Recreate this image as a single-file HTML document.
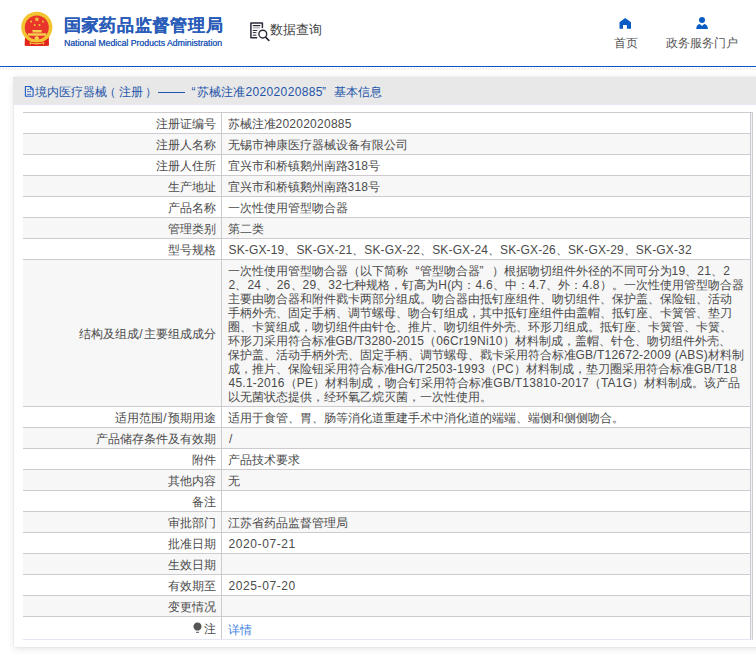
<!DOCTYPE html>
<html><head><meta charset="utf-8">
<style>
*{margin:0;padding:0;box-sizing:border-box}
html,body{width:756px;height:655px;overflow:hidden;background:#fff;font-family:"Liberation Sans",sans-serif;color:#4b4b4b;font-size:12px}
.hdr{position:absolute;left:0;top:0;width:756px;height:66px}
.emb{position:absolute;left:18px;top:8px;width:38px;height:42px}
.t1{position:absolute;left:63.5px;top:14.5px;font-size:17px;letter-spacing:0.75px;font-weight:bold;color:#2a5cb8;text-shadow:0.4px 0 0 #2a5cb8;line-height:22px;white-space:nowrap}
.t2{position:absolute;left:64px;top:38px;font-size:9.3px;color:#2a5cb8;line-height:10px;white-space:nowrap;transform:scaleX(0.935);transform-origin:0 0;text-shadow:0.15px 0 0 #2a5cb8}
.sq{position:absolute;left:247px;top:19px;width:26px;height:24px}
.sqt{position:absolute;left:270px;top:21.5px;font-size:13px;color:#444;line-height:16px;white-space:nowrap}
.nav1{position:absolute;left:614px;top:36px;font-size:12px;line-height:14px;color:#555;white-space:nowrap}
.nav2{position:absolute;left:665.5px;top:36px;font-size:12px;line-height:14px;color:#555;white-space:nowrap}
.ic1{position:absolute;left:614px;top:14px;width:22px;height:18px}
.ic2{position:absolute;left:691px;top:14px;width:22px;height:18px}
.bl{position:absolute;left:0;top:66px;width:756px;height:1px;background:#0757c2}
.d1{position:absolute;left:0;top:68px;width:756px;height:1px;background:repeating-linear-gradient(90deg,#e0e0e0 0 1px,#fff 1px 3px)}
.d2{position:absolute;left:2px;top:69px;width:756px;height:1px;background:repeating-linear-gradient(90deg,#e6e6e6 0 1px,#fff 1px 3px)}
.panel{position:absolute;left:14px;top:77px;width:760px;height:570px;background:#fff;box-shadow:0 0 2px rgba(0,0,0,.09),0 2px 8px rgba(0,0,0,.1)}
.ph{position:absolute;left:-1px;top:0;width:761px;height:28px;background:#e8e8e8;color:#1f55a8;line-height:27px;white-space:nowrap;border-bottom:1px solid #e6eaf3}
.ph span{position:absolute;top:2px}
.ph svg{position:absolute;left:9px;top:6px;width:14px;height:16px}
.tw{position:absolute;left:9px;top:35px;width:730px;border-top:1px solid #cecbce;border-right:1px solid #cecbce;border-bottom:1px solid #e3e7f1;background:#eef1f6}
table{width:728px;border-collapse:collapse;table-layout:fixed}
td{border-top:1px solid #cecbce;height:21px;padding:2px 6px 0 6px;line-height:14px;vertical-align:middle;white-space:nowrap;background:#fff}
tr:first-child td{border-top:none;height:20px}
td.l{width:198px;text-align:right;padding-right:5px;border-right:1px solid #cecbce}
td.v{border-right:1px solid #cecbce}
tr:nth-child(even) td{background:#f7f7f7}
.big td{height:147px}
tr.last td{height:23px}
b{font-weight:normal}
.n{letter-spacing:0.25px}
.n2{letter-spacing:0.15px}
.sl{padding:0 0.8px}
.f{margin-left:1px}
.ql{display:inline-block;width:12px;text-align:right}
.qr{display:inline-block;width:12px;text-align:left}
a{color:#3d7fe0;text-decoration:none;position:relative;top:1px}
.bulb{display:inline-block;vertical-align:-1px;width:9px;height:12px;margin-right:2px}
.c{display:inline-block;width:1em;text-align:center;font-style:normal}
.t1 .c{width:calc(1em + 0.75px)}
</style></head><body>
<div class="hdr">
  <svg class="emb" viewBox="18 8 38 42">
    <path d="M25 37 L48.8 37 L49 45.6 Q44 46 40 45.2 L33.5 45.2 Q29 46 24.6 45.6 Z" fill="#e3261b"/>
    <circle cx="36.8" cy="27.3" r="15.6" fill="#f3c431"/>
    <circle cx="36.8" cy="27.4" r="12" fill="#e8342a"/>
    <path d="M36.9 16.6 L37.6 18.5 L39.5 18.5 L38 19.7 L38.6 21.6 L36.9 20.4 L35.2 21.6 L35.8 19.7 L34.3 18.5 L36.2 18.5Z" fill="#f6d040"/>
    <circle cx="31.1" cy="21.5" r="1" fill="#f0c63a"/>
    <circle cx="43" cy="21.5" r="1" fill="#f0c63a"/>
    <circle cx="34.7" cy="25" r="1" fill="#f0c63a"/>
    <circle cx="39.5" cy="25" r="1" fill="#f0c63a"/>
    <path d="M31.8 30 L42.4 30 L41.6 31 L41.6 32.4 L32.6 32.4 L32.6 31Z" fill="#f5d050"/>
    <rect x="27.9" y="33.3" width="18.2" height="2.4" fill="#f5d050"/>
    <path d="M26.5 41.2 Q36.8 43.6 47.1 41.2 L48.6 45.4 Q36.8 46.6 25 45.4Z" fill="#e3261b"/>
    <path d="M36.8 36 L37.8 36.4 L38.8 37.4 L39 38.6 L38.3 39.7 L36.8 40.2 L35.3 39.7 L34.6 38.6 L34.8 37.4 L35.8 36.4Z" fill="#f5d24a"/>
    <path d="M29.3 42 Q36.9 44.6 44.5 42 L44 43.4 L43.6 45.3 L42.8 43.6 Q36.9 45.2 31 43.6 L30.2 45.3 L29.8 43.4Z" fill="#f2cc48"/>
  </svg>
  <div class="t1"><i class="c">国</i><i class="c">家</i><i class="c">药</i><i class="c">品</i><i class="c">监</i><i class="c">督</i><i class="c">管</i><i class="c">理</i><i class="c">局</i></div>
  <div class="t2">National Medical Products Administration</div>
  <svg class="sq" viewBox="247 19 26 24" fill="none" stroke="#2b2b3b" stroke-linecap="round" stroke-linejoin="round">
    <path d="M256.7 37.7 H250.9 V22.9 H262.4 V27.6" stroke-width="1.5"/>
    <path d="M253.2 25.6 H259.8" stroke-width="1.1"/>
    <path d="M253.2 27.9 H259.8" stroke-width="1" stroke="#9a9aa4"/>
    <path d="M253.2 30.5 H256.8 M253.2 32.6 H256 M253.2 35.2 H256" stroke-width="1"/>
    <circle cx="262.8" cy="34.1" r="3.9" stroke-width="1.4"/>
    <path d="M265.6 37.1 L268.8 40.3" stroke-width="1.7"/>
  </svg>
  <div class="sqt"><i class="c">数</i><i class="c">据</i><i class="c">查</i><i class="c">询</i></div>
  <svg class="ic1" viewBox="614 14 22 18"><path d="M625.2 18 L631 22.2 L631 28.8 L626.9 28.8 L626.9 24.9 L623 24.9 L623 28.8 L619.5 28.8 L619.5 22.2Z" fill="#0a5cc5"/></svg>
  <div class="nav1"><i class="c">首</i><i class="c">页</i></div>
  <svg class="ic2" viewBox="691 14 22 18"><circle cx="702" cy="20.1" r="3" fill="#0a5cc5"/><path d="M696.2 29 Q696.5 24.3 699.8 23.9 L702 25.9 L704.2 23.9 Q707.6 24.3 708 29Z" fill="#0a5cc5"/></svg>
  <div class="nav2"><i class="c">政</i><i class="c">务</i><i class="c">服</i><i class="c">务</i><i class="c">门</i><i class="c">户</i></div>
</div>
<div class="bl"></div>
<div class="d1"></div><div class="d2"></div>
<div class="panel">
  <div class="ph">
    <svg viewBox="22 83 14 16" fill="none" stroke="#1f5fc5" stroke-linejoin="round">
      <path d="M25.4 86.5 H30.4 L33.1 89.2 V96.3 H25.4 Z" stroke-width="1.1"/>
      <path d="M30.4 86.5 V89.2 H33.1" stroke-width="1"/>
      <path d="M27 89.5 H28.8 M27 91.6 H31 M27 94.4 H31" stroke-width="1" stroke="#4a73c8"/>
    </svg>
    <span style="left:21.5px"><i class="c">境</i><i class="c">内</i><i class="c">医</i><i class="c">疗</i><i class="c">器</i><i class="c">械</i></span>
    <span style="left:91px"><i class="c">（</i></span>
    <span style="left:105.6px"><i class="c">注</i><i class="c">册</i></span>
    <span style="left:132px"><i class="c">）</i></span>
    <i style="position:absolute;left:145.3px;top:15px;width:26.3px;height:1px;background:#1f55a8"></i>
    <span style="left:178.5px">“</span>
    <span style="left:183.7px"><i class="c">苏</i><i class="c">械</i><i class="c">注</i><i class="c">准</i></span>
    <span style="left:232.5px;letter-spacing:0.35px">20202020885</span>
    <span style="left:309px">”</span>
    <span style="left:321px"><i class="c">基</i><i class="c">本</i><i class="c">信</i><i class="c">息</i></span>
  </div>
  <div class="tw">
  <table>
    <tr><td class="l"><i class="c">注</i><i class="c">册</i><i class="c">证</i><i class="c">编</i><i class="c">号</i></td><td class="v"><i class="c">苏</i><i class="c">械</i><i class="c">注</i><i class="c">准</i><b class="n">20202020885</b></td></tr>
    <tr><td class="l"><i class="c">注</i><i class="c">册</i><i class="c">人</i><i class="c">名</i><i class="c">称</i></td><td class="v"><i class="c">无</i><i class="c">锡</i><i class="c">市</i><i class="c">神</i><i class="c">康</i><i class="c">医</i><i class="c">疗</i><i class="c">器</i><i class="c">械</i><i class="c">设</i><i class="c">备</i><i class="c">有</i><i class="c">限</i><i class="c">公</i><i class="c">司</i></td></tr>
    <tr><td class="l"><i class="c">注</i><i class="c">册</i><i class="c">人</i><i class="c">住</i><i class="c">所</i></td><td class="v"><i class="c">宜</i><i class="c">兴</i><i class="c">市</i><i class="c">和</i><i class="c">桥</i><i class="c">镇</i><i class="c">鹅</i><i class="c">州</i><i class="c">南</i><i class="c">路</i><b class="n">318</b><i class="c">号</i></td></tr>
    <tr><td class="l"><i class="c">生</i><i class="c">产</i><i class="c">地</i><i class="c">址</i></td><td class="v"><i class="c">宜</i><i class="c">兴</i><i class="c">市</i><i class="c">和</i><i class="c">桥</i><i class="c">镇</i><i class="c">鹅</i><i class="c">州</i><i class="c">南</i><i class="c">路</i><b class="n">318</b><i class="c">号</i></td></tr>
    <tr><td class="l"><i class="c">产</i><i class="c">品</i><i class="c">名</i><i class="c">称</i></td><td class="v"><i class="c">一</i><i class="c">次</i><i class="c">性</i><i class="c">使</i><i class="c">用</i><i class="c">管</i><i class="c">型</i><i class="c">吻</i><i class="c">合</i><i class="c">器</i></td></tr>
    <tr><td class="l"><i class="c">管</i><i class="c">理</i><i class="c">类</i><i class="c">别</i></td><td class="v"><i class="c">第</i><i class="c">二</i><i class="c">类</i></td></tr>
    <tr><td class="l"><i class="c">型</i><i class="c">号</i><i class="c">规</i><i class="c">格</i></td><td class="v"><b class="n2 f">SK-GX-19</b><i class="c">、</i><b class="n2">SK-GX-21</b><i class="c">、</i><b class="n2">SK-GX-22</b><i class="c">、</i><b class="n2">SK-GX-24</b><i class="c">、</i><b class="n2">SK-GX-26</b><i class="c">、</i><b class="n2">SK-GX-29</b><i class="c">、</i><b class="n2">SK-GX-32</b></td></tr>
    <tr class="big"><td class="l"><i class="c">结</i><i class="c">构</i><i class="c">及</i><i class="c">组</i><i class="c">成</i><b class="sl">/</b><i class="c">主</i><i class="c">要</i><i class="c">组</i><i class="c">成</i><i class="c">成</i><i class="c">分</i></td><td class="v"><i class="c">一</i><i class="c">次</i><i class="c">性</i><i class="c">使</i><i class="c">用</i><i class="c">管</i><i class="c">型</i><i class="c">吻</i><i class="c">合</i><i class="c">器</i><i class="c">（</i><i class="c">以</i><i class="c">下</i><i class="c">简</i><i class="c">称</i><b class="ql">“</b><i class="c">管</i><i class="c">型</i><i class="c">吻</i><i class="c">合</i><i class="c">器</i><b class="qr">”</b><i class="c">）</i><i class="c">根</i><i class="c">据</i><i class="c">吻</i><i class="c">切</i><i class="c">组</i><i class="c">件</i><i class="c">外</i><i class="c">径</i><i class="c">的</i><i class="c">不</i><i class="c">同</i><i class="c">可</i><i class="c">分</i><i class="c">为</i><b class="n">19</b><i class="c">、</i><b class="n">21</b><i class="c">、</i><b class="n">2</b><br><b class="n f">2</b><i class="c">、</i><b class="n">24</b> <i class="c">、</i><b class="n">26</b><i class="c">、</i><b class="n">29</b><i class="c">、</i><b class="n">32</b><i class="c">七</i><i class="c">种</i><i class="c">规</i><i class="c">格</i><i class="c">，</i><i class="c">钉</i><i class="c">高</i><i class="c">为</i><b class="n">H(</b><i class="c">内</i><i class="c">：</i><b class="n">4.6</b><i class="c">、</i><i class="c">中</i><i class="c">：</i><b class="n">4.7</b><i class="c">、</i><i class="c">外</i><i class="c">：</i><b class="n">4.8</b><i class="c">）</i><i class="c">。</i><i class="c">一</i><i class="c">次</i><i class="c">性</i><i class="c">使</i><i class="c">用</i><i class="c">管</i><i class="c">型</i><i class="c">吻</i><i class="c">合</i><i class="c">器</i><br><i class="c">主</i><i class="c">要</i><i class="c">由</i><i class="c">吻</i><i class="c">合</i><i class="c">器</i><i class="c">和</i><i class="c">附</i><i class="c">件</i><i class="c">戳</i><i class="c">卡</i><i class="c">两</i><i class="c">部</i><i class="c">分</i><i class="c">组</i><i class="c">成</i><i class="c">。</i><i class="c">吻</i><i class="c">合</i><i class="c">器</i><i class="c">由</i><i class="c">抵</i><i class="c">钉</i><i class="c">座</i><i class="c">组</i><i class="c">件</i><i class="c">、</i><i class="c">吻</i><i class="c">切</i><i class="c">组</i><i class="c">件</i><i class="c">、</i><i class="c">保</i><i class="c">护</i><i class="c">盖</i><i class="c">、</i><i class="c">保</i><i class="c">险</i><i class="c">钮</i><i class="c">、</i><i class="c">活</i><i class="c">动</i><br><i class="c">手</i><i class="c">柄</i><i class="c">外</i><i class="c">壳</i><i class="c">、</i><i class="c">固</i><i class="c">定</i><i class="c">手</i><i class="c">柄</i><i class="c">、</i><i class="c">调</i><i class="c">节</i><i class="c">螺</i><i class="c">母</i><i class="c">、</i><i class="c">吻</i><i class="c">合</i><i class="c">钉</i><i class="c">组</i><i class="c">成</i><i class="c">，</i><i class="c">其</i><i class="c">中</i><i class="c">抵</i><i class="c">钉</i><i class="c">座</i><i class="c">组</i><i class="c">件</i><i class="c">由</i><i class="c">盖</i><i class="c">帽</i><i class="c">、</i><i class="c">抵</i><i class="c">钉</i><i class="c">座</i><i class="c">、</i><i class="c">卡</i><i class="c">簧</i><i class="c">管</i><i class="c">、</i><i class="c">垫</i><i class="c">刀</i><br><i class="c">圈</i><i class="c">、</i><i class="c">卡</i><i class="c">簧</i><i class="c">组</i><i class="c">成</i><i class="c">，</i><i class="c">吻</i><i class="c">切</i><i class="c">组</i><i class="c">件</i><i class="c">由</i><i class="c">针</i><i class="c">仓</i><i class="c">、</i><i class="c">推</i><i class="c">片</i><i class="c">、</i><i class="c">吻</i><i class="c">切</i><i class="c">组</i><i class="c">件</i><i class="c">外</i><i class="c">壳</i><i class="c">、</i><i class="c">环</i><i class="c">形</i><i class="c">刀</i><i class="c">组</i><i class="c">成</i><i class="c">。</i><i class="c">抵</i><i class="c">钉</i><i class="c">座</i><i class="c">、</i><i class="c">卡</i><i class="c">簧</i><i class="c">管</i><i class="c">、</i><i class="c">卡</i><i class="c">簧</i><i class="c">、</i><br><i class="c">环</i><i class="c">形</i><i class="c">刀</i><i class="c">采</i><i class="c">用</i><i class="c">符</i><i class="c">合</i><i class="c">标</i><i class="c">准</i><b class="n">GB/T3280-2015</b><i class="c">（</i><b class="n">06Cr19Ni10</b><i class="c">）</i><i class="c">材</i><i class="c">料</i><i class="c">制</i><i class="c">成</i><i class="c">，</i><i class="c">盖</i><i class="c">帽</i><i class="c">、</i><i class="c">针</i><i class="c">仓</i><i class="c">、</i><i class="c">吻</i><i class="c">切</i><i class="c">组</i><i class="c">件</i><i class="c">外</i><i class="c">壳</i><i class="c">、</i><br><i class="c">保</i><i class="c">护</i><i class="c">盖</i><i class="c">、</i><i class="c">活</i><i class="c">动</i><i class="c">手</i><i class="c">柄</i><i class="c">外</i><i class="c">壳</i><i class="c">、</i><i class="c">固</i><i class="c">定</i><i class="c">手</i><i class="c">柄</i><i class="c">、</i><i class="c">调</i><i class="c">节</i><i class="c">螺</i><i class="c">母</i><i class="c">、</i><i class="c">戳</i><i class="c">卡</i><i class="c">采</i><i class="c">用</i><i class="c">符</i><i class="c">合</i><i class="c">标</i><i class="c">准</i><b class="n">GB/T12672-2009 (ABS)</b><i class="c">材</i><i class="c">料</i><i class="c">制</i><br><i class="c">成</i><i class="c">，</i><i class="c">推</i><i class="c">片</i><i class="c">、</i><i class="c">保</i><i class="c">险</i><i class="c">钮</i><i class="c">采</i><i class="c">用</i><i class="c">符</i><i class="c">合</i><i class="c">标</i><i class="c">准</i><b class="n">HG/T2503-1993</b><i class="c">（</i><b class="n">PC</b><i class="c">）</i><i class="c">材</i><i class="c">料</i><i class="c">制</i><i class="c">成</i><i class="c">，</i><i class="c">垫</i><i class="c">刀</i><i class="c">圈</i><i class="c">采</i><i class="c">用</i><i class="c">符</i><i class="c">合</i><i class="c">标</i><i class="c">准</i><b class="n">GB/T18</b><br><b class="n f">45.1-2016</b><i class="c">（</i><b class="n">PE</b><i class="c">）</i><i class="c">材</i><i class="c">料</i><i class="c">制</i><i class="c">成</i><i class="c">，</i><i class="c">吻</i><i class="c">合</i><i class="c">钉</i><i class="c">采</i><i class="c">用</i><i class="c">符</i><i class="c">合</i><i class="c">标</i><i class="c">准</i><b class="n">GB/T13810-2017</b><i class="c">（</i><b class="n">TA1G</b><i class="c">）</i><i class="c">材</i><i class="c">料</i><i class="c">制</i><i class="c">成</i><i class="c">。</i><i class="c">该</i><i class="c">产</i><i class="c">品</i><br><i class="c">以</i><i class="c">无</i><i class="c">菌</i><i class="c">状</i><i class="c">态</i><i class="c">提</i><i class="c">供</i><i class="c">，</i><i class="c">经</i><i class="c">环</i><i class="c">氧</i><i class="c">乙</i><i class="c">烷</i><i class="c">灭</i><i class="c">菌</i><i class="c">，</i><i class="c">一</i><i class="c">次</i><i class="c">性</i><i class="c">使</i><i class="c">用</i><i class="c">。</i></td></tr>
    <tr><td class="l"><i class="c">适</i><i class="c">用</i><i class="c">范</i><i class="c">围</i><b class="sl">/</b><i class="c">预</i><i class="c">期</i><i class="c">用</i><i class="c">途</i></td><td class="v"><i class="c">适</i><i class="c">用</i><i class="c">于</i><i class="c">食</i><i class="c">管</i><i class="c">、</i><i class="c">胃</i><i class="c">、</i><i class="c">肠</i><i class="c">等</i><i class="c">消</i><i class="c">化</i><i class="c">道</i><i class="c">重</i><i class="c">建</i><i class="c">手</i><i class="c">术</i><i class="c">中</i><i class="c">消</i><i class="c">化</i><i class="c">道</i><i class="c">的</i><i class="c">端</i><i class="c">端</i><i class="c">、</i><i class="c">端</i><i class="c">侧</i><i class="c">和</i><i class="c">侧</i><i class="c">侧</i><i class="c">吻</i><i class="c">合</i><i class="c">。</i></td></tr>
    <tr><td class="l"><i class="c">产</i><i class="c">品</i><i class="c">储</i><i class="c">存</i><i class="c">条</i><i class="c">件</i><i class="c">及</i><i class="c">有</i><i class="c">效</i><i class="c">期</i></td><td class="v"><b class="n" style="padding-left:1.5px">/</b></td></tr>
    <tr><td class="l"><i class="c">附</i><i class="c">件</i></td><td class="v"><i class="c">产</i><i class="c">品</i><i class="c">技</i><i class="c">术</i><i class="c">要</i><i class="c">求</i></td></tr>
    <tr><td class="l"><i class="c">其</i><i class="c">他</i><i class="c">内</i><i class="c">容</i></td><td class="v"><i class="c">无</i></td></tr>
    <tr><td class="l"><i class="c">备</i><i class="c">注</i></td><td class="v"></td></tr>
    <tr><td class="l"><i class="c">审</i><i class="c">批</i><i class="c">部</i><i class="c">门</i></td><td class="v"><i class="c">江</i><i class="c">苏</i><i class="c">省</i><i class="c">药</i><i class="c">品</i><i class="c">监</i><i class="c">督</i><i class="c">管</i><i class="c">理</i><i class="c">局</i></td></tr>
    <tr><td class="l"><i class="c">批</i><i class="c">准</i><i class="c">日</i><i class="c">期</i></td><td class="v"><b class="n f" style="letter-spacing:0.6px">2020-07-21</b></td></tr>
    <tr><td class="l"><i class="c">生</i><i class="c">效</i><i class="c">日</i><i class="c">期</i></td><td class="v"></td></tr>
    <tr><td class="l"><i class="c">有</i><i class="c">效</i><i class="c">期</i><i class="c">至</i></td><td class="v"><b class="n f" style="letter-spacing:0.6px">2025-07-20</b></td></tr>
    <tr><td class="l"><i class="c">变</i><i class="c">更</i><i class="c">情</i><i class="c">况</i></td><td class="v"></td></tr>
    <tr class="last"><td class="l"><svg class="bulb" viewBox="0 0 9 12"><path d="M4.5 0.5 C7 0.5 8.5 2.3 8.5 4.5 C8.5 6.5 7.2 7.6 6 8.6 L3 8.6 C1.8 7.6 0.5 6.5 0.5 4.5 C0.5 2.3 2 0.5 4.5 0.5Z" fill="#555"/><path d="M3 10.3 H6" stroke="#555" stroke-width="1"/></svg><i class="c">注</i></td><td class="v"><a><i class="c">详</i><i class="c">情</i></a></td></tr>
  </table>
  </div>
</div>
</body></html>
